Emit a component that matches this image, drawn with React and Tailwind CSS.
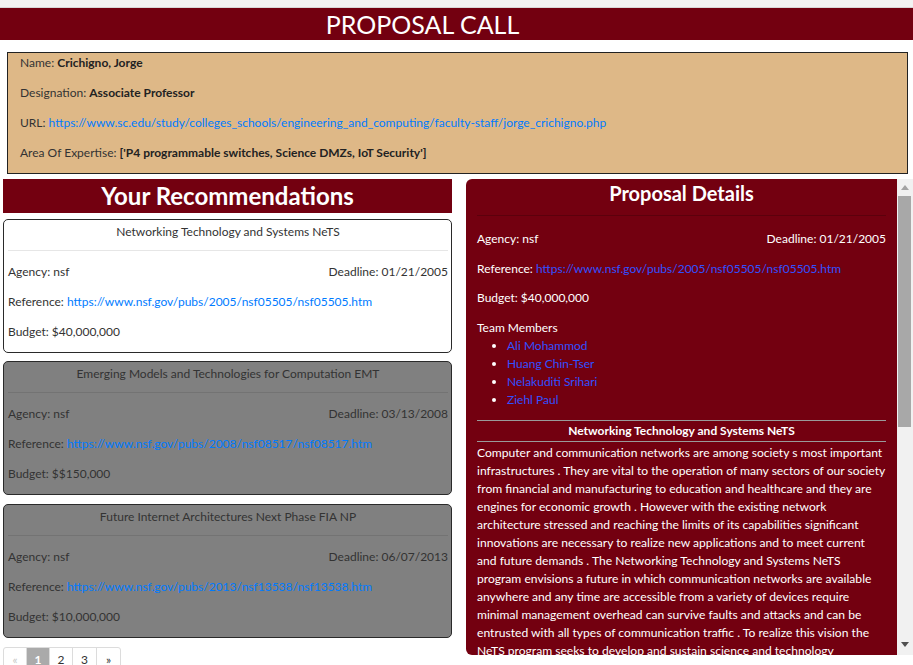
import React from "react";

const cards = [
  {
    title: "Networking Technology and Systems NeTS",
    deadline: "01/21/2005",
    url: "https://www.nsf.gov/pubs/2005/nsf05505/nsf05505.htm",
    budget: "$40,000,000",
    active: true,
  },
  {
    title: "Emerging Models and Technologies for Computation EMT",
    deadline: "03/13/2008",
    url: "https://www.nsf.gov/pubs/2008/nsf08517/nsf08517.htm",
    budget: "$$150,000",
  },
  {
    title: "Future Internet Architectures Next Phase FIA NP",
    deadline: "06/07/2013",
    url: "https://www.nsf.gov/pubs/2013/nsf13538/nsf13538.htm",
    budget: "$10,000,000",
  },
];

function Card({ c, className }) {
  return (
    <div
      className={
        "h-[134px] rounded-[5px] border border-[#2a2a2a] pl-[4px] pr-[3px] pt-[3px] " +
        (c.active ? "bg-white " : "bg-[#808080] ") +
        className
      }
    >
      <div className="text-center leading-[18px]">{c.title}</div>
      <div className={"mt-[9px] h-px " + (c.active ? "bg-[#e6e6e6]" : "bg-[#737373]")} />
      <div className="mt-[12px] flex justify-between leading-[18px]">
        <span>Agency: nsf</span>
        <span>Deadline: {c.deadline}</span>
      </div>
      <div className="mt-[12px] leading-[18px]">
        Reference: <span className="text-[#007bff]">{c.url}</span>
      </div>
      <div className="mt-[12px] leading-[18px]">Budget: {c.budget}</div>
    </div>
  );
}

const lines = [
  "Computer and communication networks are among society s most important",
  "infrastructures . They are vital to the operation of many sectors of our society",
  "from financial and manufacturing to education and healthcare and they are",
  "engines for economic growth . However with the existing network",
  "architecture stressed and reaching the limits of its capabilities significant",
  "innovations are necessary to realize new applications and to meet current",
  "and future demands . The Networking Technology and Systems NeTS",
  "program envisions a future in which communication networks are available",
  "anywhere and any time are accessible from a variety of devices require",
  "minimal management overhead can survive faults and attacks and can be",
  "entrusted with all types of communication traffic . To realize this vision the",
  "NeTS program seeks to develop and sustain science and technology",
  "research that will enable the networks of the future.",
];

export default function App() {
  return (
    <div className="relative h-[665px] w-[913px] overflow-hidden bg-white font-[Lato,sans-serif] text-[12px] text-[#333]">
      <div className="h-[8px] border-b border-[#d8d8d8] bg-[#f3f3f3]" />
      <div className="h-[32px] bg-[#730010] pr-[68px] text-center text-[25px] leading-[32px] text-white">
        PROPOSAL CALL
      </div>

      <div className="ml-[7px] mr-[5px] mt-[12px] flex flex-col gap-3 border border-[#222] bg-[#deb887] pb-[11px] pl-[12px] pt-px leading-[18px]">
        <div>
          Name: <b className="text-[#222]">Crichigno, Jorge</b>
        </div>
        <div>
          Designation: <b className="text-[#222]">Associate Professor</b>
        </div>
        <div>
          URL:{" "}
          <span className="text-[#007bff]">
            https://www.sc.edu/study/colleges_schools/engineering_and_computing/faculty-staff/jorge_crichigno.php
          </span>
        </div>
        <div>
          Area Of Expertise:{" "}
          <b className="text-[#222]">['P4 programmable switches, Science DMZs, IoT Security']</b>
        </div>
      </div>

      <div className="mt-[5px] flex gap-[14px] pl-[3px]">
        <div className="flex w-[449px] flex-col">
          <div className="h-[34px] bg-[#730010] text-center text-[24px] font-bold leading-[34px] text-white">
            Your Recommendations
          </div>
          <Card c={cards[0]} className="mt-[6px]" />
          <Card c={cards[1]} className="mt-[8px]" />
          <Card c={cards[2]} className="mt-[9px]" />
          <div className="mt-[9px] flex text-[12px] leading-[24px]">
            <div className="h-[26px] w-[24px] rounded-l-[3px] border border-[#dcdcdc] text-center text-[#c8c8c8]">«</div>
            <div className="-ml-px h-[26px] w-[24px] border border-[#dcdcdc] bg-[#aaaaaa] text-center font-bold text-white">1</div>
            <div className="-ml-px h-[26px] w-[24px] border border-[#dcdcdc] text-center">2</div>
            <div className="-ml-px h-[26px] w-[25px] border border-[#dcdcdc] text-center">3</div>
            <div className="-ml-px h-[26px] w-[25px] rounded-r-[3px] border border-[#dcdcdc] text-center">»</div>
          </div>
        </div>

        <div className="flex h-[476px] w-[447px]">
          <div className="flex-1 overflow-hidden rounded-l-[6px] bg-[#730010] px-[11px] text-white">
            <div className="text-center text-[20px] font-bold leading-[28px]">Proposal Details</div>
            <div className="mt-[8px] h-px bg-[#5c000c]" />
            <div className="mt-[14px] flex justify-between leading-[18px]">
              <span>Agency: nsf</span>
              <span>Deadline: 01/21/2005</span>
            </div>
            <div className="mt-[12px] leading-[18px]">
              Reference: <span className="text-[#3050ff]">https://www.nsf.gov/pubs/2005/nsf05505/nsf05505.htm</span>
            </div>
            <div className="mt-[11px] leading-[18px]">Budget: $40,000,000</div>
            <div className="mt-[12px] leading-[18px]">Team Members</div>
            <ul className="list-disc pl-[30px] leading-[18px] marker:text-white">
              <li className="text-[#3050ff]">Ali Mohammod</li>
              <li className="text-[#3050ff]">Huang Chin-Tser</li>
              <li className="text-[#3050ff]">Nelakuditi Srihari</li>
              <li className="text-[#3050ff]">Ziehl Paul</li>
            </ul>
            <div className="mt-[11px] h-px bg-[#9a9a9a]" />
            <div className="text-center font-bold leading-[20px]">Networking Technology and Systems NeTS</div>
            <div className="h-px bg-[#9a9a9a]" />
            <p className="mt-[2px] whitespace-nowrap text-[12.1px] leading-[18px]">
              {lines.map((l, i) => (
                <React.Fragment key={i}>
                  {l}
                  {i < lines.length - 1 && <br />}
                </React.Fragment>
              ))}
            </p>
          </div>
          <div className="flex w-[16px] flex-col bg-[#f1f1f1]">
            <div className="flex h-[17px] items-center justify-center">
              <svg width="8" height="5" viewBox="0 0 8 5">
                <polygon points="0,5 8,5 4,0" fill="#a3a3a3" />
              </svg>
            </div>
            <div className="ml-px h-[231px] w-[13px] bg-[#a8a8a8]" />
            <div className="flex-1" />
            <div className="flex h-[17px] items-center justify-center pb-[4px]">
              <svg width="8" height="5" viewBox="0 0 8 5">
                <polygon points="0,0 8,0 4,5" fill="#505050" />
              </svg>
            </div>
          </div>
        </div>
      </div>
    </div>
  );
}
